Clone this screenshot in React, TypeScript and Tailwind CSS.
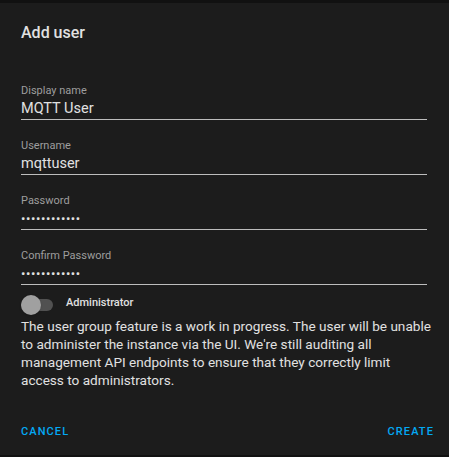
import React, { useState } from 'react';

const fields = [
  { label: 'Display name', value: 'MQTT User', secret: false },
  { label: 'Username', value: 'mqttuser', secret: false },
  { label: 'Password', value: '••••••••••••', secret: true },
  { label: 'Confirm Password', value: '••••••••••••', secret: true },
];

export default function App() {
  const [admin, setAdmin] = useState(false);

  return (
    <div className="w-[449px] h-[457px] bg-[#111111] pt-[3px] pb-[2px] font-['Roboto',sans-serif]">
      <div className="h-full bg-[#1c1c1c] flex flex-col">
        {/* Title */}
        <h2 className="px-[21px] pt-[20px] text-[16px] leading-[20px] font-medium text-[#e1e1e1]">Add user</h2>

        {/* Fields */}
        <div className="flex flex-col gap-[19px] pl-[21px] pr-[22px] mt-[41px]">
          {fields.map((f) => (
            <div key={f.label} className="flex flex-col border-b border-[#bdbdbd]">
              <span className="text-[11px] leading-[14px] text-[#9e9e9e]">{f.label}</span>
              {f.secret ? (
                <span className="text-[13px] leading-[21px] text-[#e1e1e1] tracking-[0.6px]">{f.value}</span>
              ) : (
                <span className="text-[14.5px] leading-[21px] text-[#e1e1e1]">{f.value}</span>
              )}
            </div>
          ))}
        </div>

        {/* Admin toggle */}
        <div className="flex items-start pl-[21px] mt-[10px] h-[20px]">
          <button
            onClick={() => setAdmin(!admin)}
            className="relative w-[33px] h-[20px] flex items-center"
          >
            <span className={`w-[32px] h-[12px] rounded-full ${admin ? 'bg-[#03a9f4]/50' : 'bg-[#515151]'}`} />
            <span
              className={`absolute top-0 w-[20px] h-[20px] rounded-full shadow ${admin ? 'left-[13px] bg-[#03a9f4]' : 'left-0 bg-[#a0a0a0]'}`}
            />
          </button>
          <span className="ml-[12px] mt-[1px] text-[11px] leading-[14px] font-medium text-[#e1e1e1]">Administrator</span>
        </div>

        <p className="pl-[21px] pr-[14px] mt-[2px] text-[13.6px] leading-[18px] text-[#e1e1e1]">
          The user group feature is a work in progress. The user will be unable to administer the instance via the UI. We're still auditing all management API endpoints to ensure that they correctly limit access to administrators.
        </p>

        {/* Actions */}
        <div className="mt-auto flex justify-between pl-[21px] pr-[15px] pb-[16px]">
          <button className="text-[11px] leading-[14px] font-medium tracking-[1.1px] text-[#03a9f4]">CANCEL</button>
          <button className="text-[11px] leading-[14px] font-medium tracking-[1.1px] text-[#03a9f4]">CREATE</button>
        </div>
      </div>
    </div>
  );
}
